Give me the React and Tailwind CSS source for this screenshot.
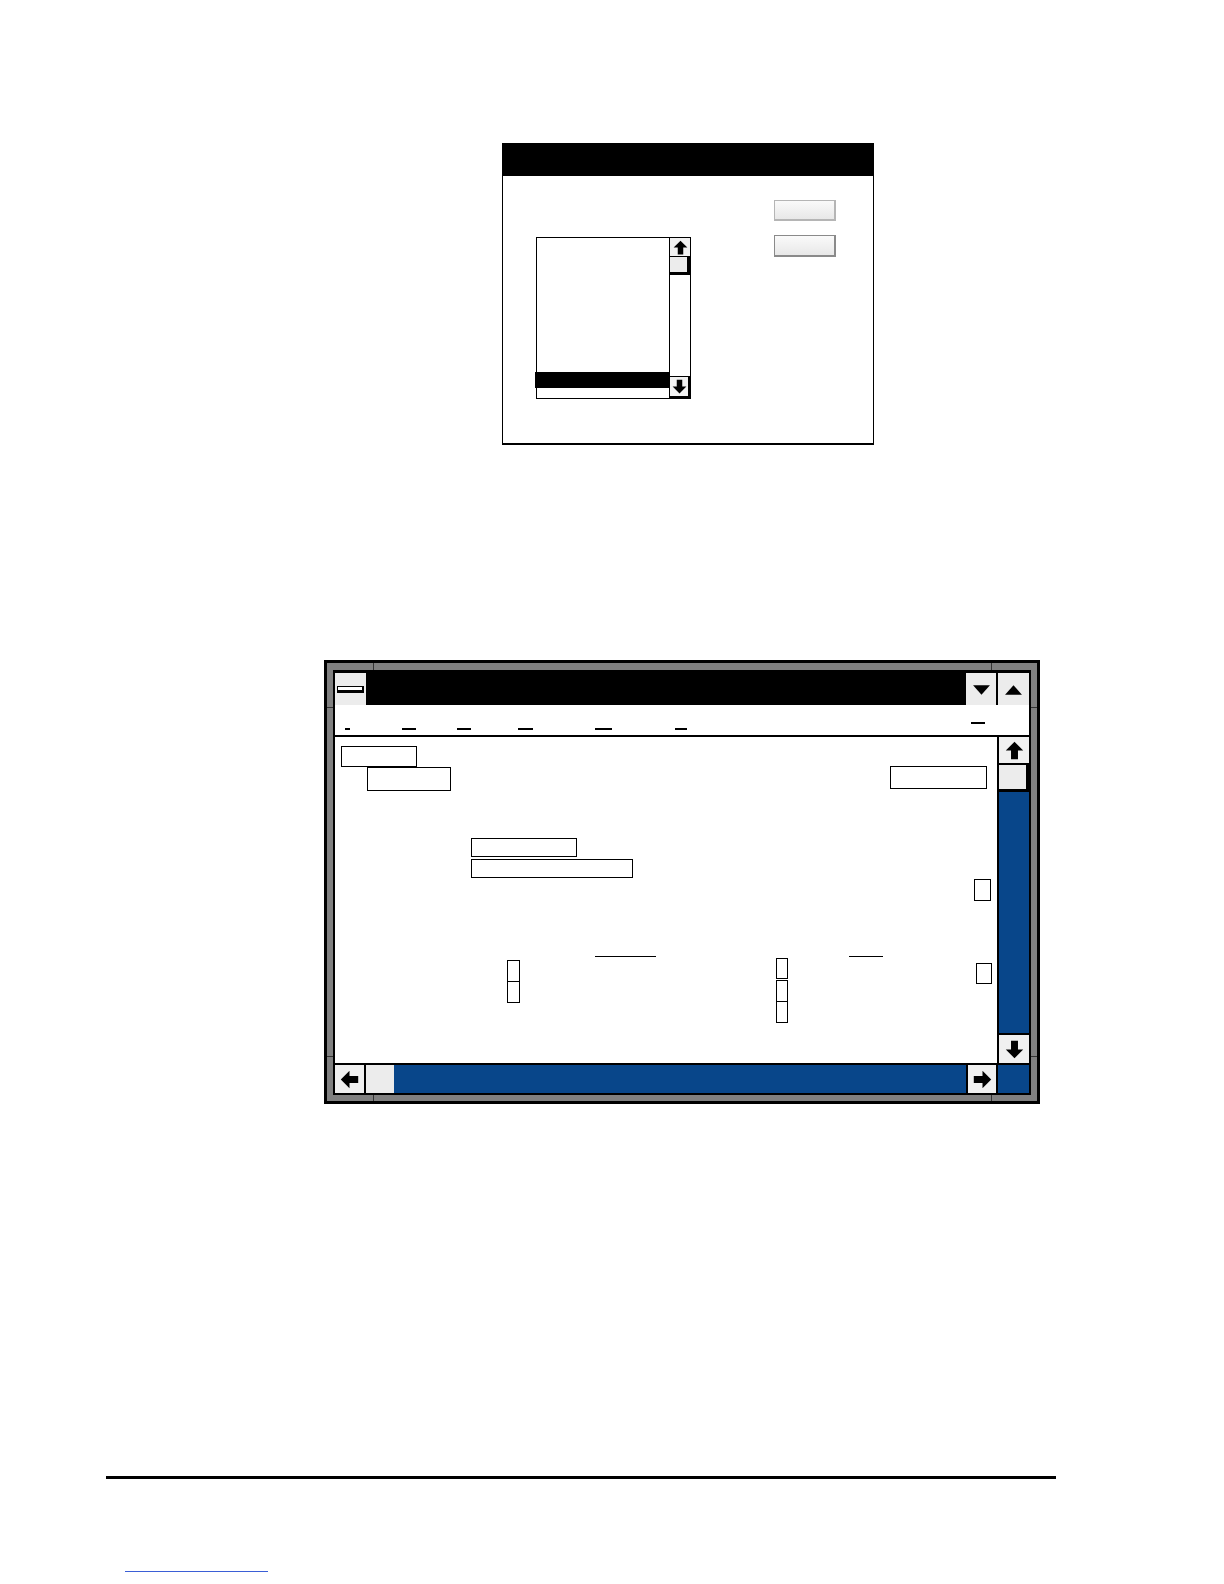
import React from "react";

const Arrow = ({ dir = "up", size = 14 }) => {
  const rot = { up: 0, right: 90, down: 180, left: 270 }[dir];
  return (
    <svg width={size} height={size} viewBox="0 0 12 12" style={{ transform: `rotate(${rot}deg)` }}>
      <path d="M6 0.5 L11.5 6 H8.2 V11.5 H3.8 V6 H0.5 Z" fill="black" />
    </svg>
  );
};

const Tri = ({ up }) => (
  <svg width="19" height="11" viewBox="0 0 18 10">
    <path d={up ? "M1 10 L9 1 L17 10 Z" : "M1 1 L17 1 L9 10 Z"} fill="black" />
  </svg>
);

const Box = ({ className }) => <div className={`border border-black bg-white ${className}`} />;

const ListDialog = () => (
  <div className="ml-[502px] mt-[143px] flex h-[302px] w-[372px] flex-col border border-black border-b-2 bg-white">
    {/* title bar */}
    <div className="h-[32px] bg-black" />
    <div className="flex">
      {/* list box */}
      <div className="ml-[33px] mt-[61px] flex h-[162px] w-[155px] border border-black">
        <div className="flex flex-1 flex-col">
          <div className="h-[134px]" />
          <div className="-ml-[2px] h-[16px] bg-black" />
        </div>
        <div className="flex w-[21px] flex-col border-l border-black">
          <div className="flex h-[19px] items-center justify-center border-b border-black bg-[#f2f2f2]">
            <Arrow dir="up" size={15} />
          </div>
          <div className="h-[18px] border-b-[3px] border-r-[3px] border-black bg-[#ececec]" />
          <div className="flex-1 bg-white" />
          <div className="flex h-[22px] items-center justify-center border-t border-r-2 border-b-2 border-black bg-[#f2f2f2]">
            <Arrow dir="down" size={15} />
          </div>
        </div>
      </div>
      {/* buttons */}
      <div className="ml-[83px] mt-[24px] flex flex-col gap-[14px]">
        <div className="h-[21px] w-[62px] border border-[#b5b5b5] border-b-2 border-r-2 bg-gradient-to-b from-[#fafafa] to-[#e8e8e8]" />
        <div className="h-[22px] w-[62px] border border-[#8a8a8a] border-b-2 border-r-2 bg-gradient-to-b from-[#fafafa] to-[#e8e8e8]" />
      </div>
    </div>
  </div>
);

const AppWindow = () => (
  <div className="relative ml-[324px] mt-[215px] h-[444px] w-[716px] border-[3px] border-black bg-[#808080] p-[6px] pt-[7px]">
    {/* frame notches */}
    <div className="absolute left-[46px] top-0 h-[7px] w-px bg-[#333]" />
    <div className="absolute right-[45px] top-0 h-[7px] w-px bg-[#333]" />
    <div className="absolute bottom-0 left-[46px] h-[6px] w-px bg-[#333]" />
    <div className="absolute bottom-0 right-[45px] h-[6px] w-px bg-[#333]" />
    <div className="absolute left-0 top-[44px] h-px w-[6px] bg-[#333]" />
    <div className="absolute right-0 top-[44px] h-px w-[6px] bg-[#333]" />
    <div className="absolute bottom-[44px] left-0 h-px w-[6px] bg-[#333]" />
    <div className="absolute bottom-[44px] right-0 h-px w-[6px] bg-[#333]" />

    <div className="flex h-full w-full flex-col border-2 border-t-[3px] border-black bg-white">
      {/* title bar */}
      <div className="flex h-[32px] bg-black">
        <div className="flex w-[32px] items-center justify-center border-r border-black bg-[#ececec]">
          <div className="h-[7px] w-[27px] border border-black border-b-[3px] border-r-2 bg-white" />
        </div>
        <div className="flex-1" />
        <div className="flex w-[31px] items-center justify-center border-l border-black bg-[#ececec]">
          <Tri />
        </div>
        <div className="ml-[2px] flex w-[31px] items-center justify-center bg-[#ececec]">
          <Tri up />
        </div>
      </div>
      {/* menu bar */}
      <div className="relative h-[32px] border-b-2 border-black">
        <div className="absolute left-[10px] top-[23px] h-[2px] w-[5px] bg-black" />
        <div className="absolute left-[67px] top-[23px] h-[2px] w-[14px] bg-black" />
        <div className="absolute left-[122px] top-[23px] h-[2px] w-[14px] bg-black" />
        <div className="absolute left-[183px] top-[23px] h-[2px] w-[15px] bg-black" />
        <div className="absolute left-[260px] top-[23px] h-[2px] w-[17px] bg-black" />
        <div className="absolute left-[340px] top-[23px] h-[2px] w-[12px] bg-black" />
        <div className="absolute left-[636px] top-[17px] h-[2px] w-[14px] bg-black" />
      </div>
      {/* client + vertical scroll */}
      <div className="flex flex-1">
        <div className="flex flex-1 flex-col">
          <Box className="ml-[6px] mt-[9px] h-[21px] w-[76px]" />
          <div className="flex items-start">
            <Box className="ml-[32px] h-[24px] w-[84px]" />
            <Box className="ml-auto mr-[10px] -mt-px h-[23px] w-[97px]" />
          </div>
          <Box className="ml-[136px] mt-[47px] h-[19px] w-[106px]" />
          <Box className="ml-[136px] mt-[2px] h-[19px] w-[162px]" />
          <Box className="ml-auto mr-[6px] mt-[1px] h-[22px] w-[17px]" />
          <div className="mt-[55px] flex items-start">
            <div className="ml-[172px] mt-[4px] flex flex-col">
              <Box className="h-[22px] w-[13px]" />
              <Box className="-mt-px h-[22px] w-[13px]" />
            </div>
            <div className="ml-[75px] h-px w-[61px] bg-black" />
            <div className="ml-[120px] mt-[2px] flex flex-col">
              <Box className="h-[21px] w-[12px]" />
              <Box className="mt-px h-[22px] w-[12px]" />
              <Box className="-mt-px h-[22px] w-[12px]" />
            </div>
            <div className="ml-[61px] h-px w-[34px] bg-black" />
            <Box className="ml-[93px] mt-[7px] h-[21px] w-[16px]" />
          </div>
        </div>
        <div className="flex w-[32px] flex-col border-l-2 border-black">
          <div className="flex h-[28px] items-center justify-center border-b-2 border-black bg-[#f0f0f0]">
            <Arrow dir="up" size={19} />
          </div>
          <div className="h-[27px] border-b-[3px] border-r-[3px] border-black bg-[#ececec]" />
          <div className="flex-1 bg-[#08468a]" />
          <div className="flex h-[30px] items-center justify-center border-t-2 border-black bg-[#f0f0f0]">
            <Arrow dir="down" size={19} />
          </div>
        </div>
      </div>
      {/* horizontal scroll */}
      <div className="flex h-[30px] border-t-2 border-black">
        <div className="flex w-[31px] items-center justify-center border-r-2 border-black bg-[#f0f0f0]">
          <Arrow dir="left" size={19} />
        </div>
        <div className="w-[28px] bg-[#ececec]" />
        <div className="flex-1 bg-[#08468a]" />
        <div className="flex w-[30px] items-center justify-center border-l-2 border-black bg-[#f0f0f0]">
          <Arrow dir="right" size={19} />
        </div>
        <div className="w-[33px] border-l-2 border-black bg-[#08468a]" />
      </div>
    </div>
  </div>
);

export default function App() {
  return (
    <div className="flex h-[1584px] w-[1224px] flex-col overflow-hidden bg-white font-['Liberation_Sans',sans-serif]">
      <ListDialog />
      <AppWindow />
      <div className="ml-[106px] mt-[372px] h-[3px] w-[950px] bg-black" />
      <div className="ml-[125px] mt-[92px] h-px w-[143px] bg-[#3b5fd6]" />
    </div>
  );
}
